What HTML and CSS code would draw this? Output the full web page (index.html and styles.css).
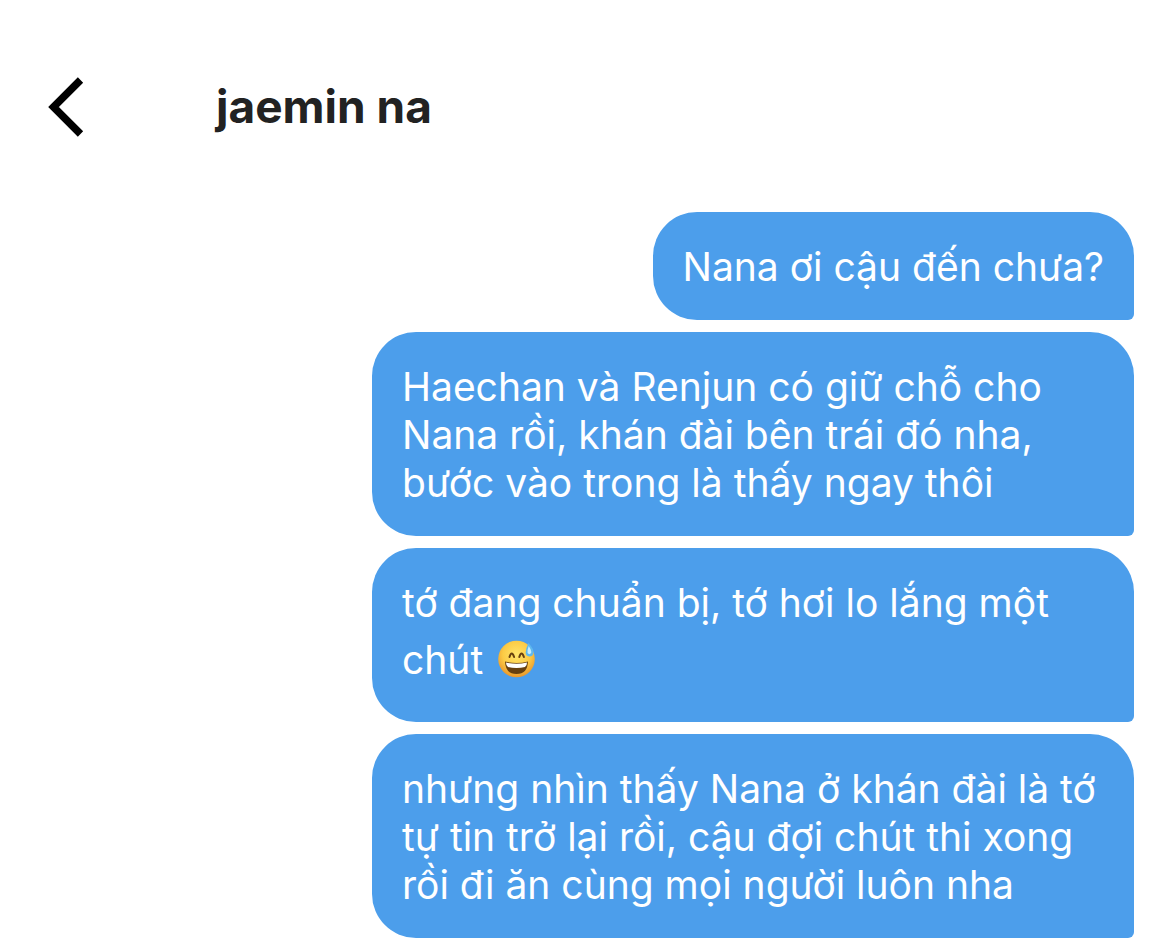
FILE: index.html
```html
<!DOCTYPE html>
<html lang="vi">
<head>
  <meta charset="UTF-8" />
  <meta name="viewport" content="width=device-width, initial-scale=1.0" />
  <title>jaemin na</title>
  <link rel="stylesheet" href="styles.css">
</head>
<body>

<header class="topbar">
  <button class="back" type="button" aria-label="Back">
    <svg viewBox="0 0 36 62" width="36" height="62" aria-hidden="true">
      <path d="M32.5 4 L5.5 31 L32.5 58" fill="none" stroke="#000" stroke-width="7.5" />
    </svg>
  </button>
  <h1>jaemin na</h1>
</header>

<main class="chat">
  <p class="bubble">Nana ơi cậu đến chưa?</p>
  <p class="bubble">Haechan và Renjun có giữ chỗ cho Nana rồi, khán đài bên trái đó nha, bước vào trong là thấy ngay thôi</p>
  <p class="bubble">tớ đang chuẩn bị, tớ hơi lo lắng một
    <span class="emoji-line">chút
      <svg viewBox="0 0 40 40" width="40" height="40" role="img" aria-label="😅">
        <defs>
          <radialGradient id="face" cx="50%" cy="38%" r="62%">
            <stop offset="0" stop-color="#ffe46a" />
            <stop offset=".6" stop-color="#fccb45" />
            <stop offset="1" stop-color="#e8962b" />
          </radialGradient>
        </defs>
        <circle cx="19.5" cy="19" r="18.3" fill="url(#face)" />
        <path d="M12.5 17q2.2-7 4.6 0M22.3 17q2.2-7 4.6 0" fill="none" stroke="#67400f" stroke-width="2" stroke-linecap="round" />
        <path d="M8 21.5q11.500 3 23 0q-.5 12.500-11.500 12.500T8 21.500z" fill="#67400f" />
        <path d="M9 22.500q10.500 2.500 21 0q0 3.500-2 4.500q-8.500 2-17 0q-2-1-2-4.500z" fill="#fff" />
        <!-- sweat drop -->
        <path d="M31.5 3q5.500 6 5 10q-.8 3.700-4.300 3.500q-3.600-.5-3.500-4.300q.2-4 2.800-9.200z" fill="#5fb9ee" />
        <path d="M31.700 6q3 4.500 2.500 7q-2 2.300-3.600 0q-.6-2.500 1.100-7z" fill="#c4ecff" />
      </svg>
    </span>
  </p>
  <p class="bubble">nhưng nhìn thấy Nana ở khán đài là tớ tự tin trở lại rồi, cậu đợi chút thi xong rồi đi ăn cùng mọi người luôn nha</p>
</main>

</body>
</html>
```
FILE: styles.css
```css
* { box-sizing:border-box; margin:0; padding:0; }
body { font-family:Inter,"Liberation Sans",sans-serif; background:#fff; color:#222; }

/* conversation header */
.topbar { display:flex; align-items:flex-start; gap:132px; padding:76px 48px 0; }
.back { border:none; background:none; cursor:pointer; }
.back svg { display:block; }
h1 { font-size:46px; line-height:60px; font-weight:700; }

/* sent messages */
.chat { display:flex; flex-direction:column; align-items:flex-end; gap:12px;
        padding:74px 35px 13px; }
.bubble { max-width:762px; padding:31px 30px 29px; background:#4c9eeb; color:#fff;
          border-radius:44px 44px 6px 44px; font-size:39px; line-height:48px; }
.emoji-line { display:inline-flex; align-items:center; gap:14px; height:66px; }
```
